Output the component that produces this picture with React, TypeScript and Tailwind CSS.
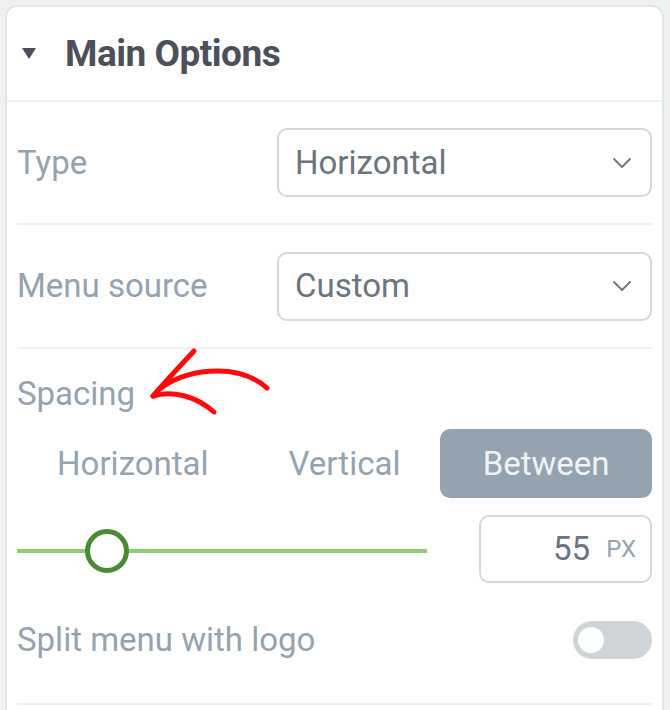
import React, { useState } from 'react';

const font = { fontFamily: 'Roboto, "Noto Sans", sans-serif' };

function Chevron() {
  return (
    <svg width="20" height="12" viewBox="0 0 20 12" fill="none" className="shrink-0">
      <path d="M2 2 L10 10 L18 2" stroke="#6b7580" strokeWidth="1.8" strokeLinecap="round" strokeLinejoin="round" />
    </svg>
  );
}

function SelectRow({ label, value, h }: { label: string; value: string; h: string }) {
  return (
    <div className={`flex items-center border-b-2 border-[#eef0f1] ${h}`}>
      <div className="w-[260px] text-[33px] text-[#95a3b1]">{label}</div>
      <div className="flex-1 h-[69px] flex items-center justify-between rounded-[10px] border-2 border-[#d3d8dc] pl-[16px] pr-[18px]">
        <span className="text-[33px] text-[#6b7580]">{value}</span>
        <Chevron />
      </div>
    </div>
  );
}

export default function App() {
  const [tab, setTab] = useState('Between');
  const [split, setSplit] = useState(false);
  const tabs = ['Horizontal', 'Vertical', 'Between'];

  return (
    <div className="w-[670px] h-[710px] bg-[#eef1f0] pt-[5px] pl-[5px] overflow-hidden" style={font}>
      <div className="relative w-[659px] h-[720px] bg-white border-2 border-[#e0e7e6] rounded-t-[12px]">
        {/* header */}
        <div className="h-[95px] flex items-center pl-[15px] border-b-2 border-[#eef0f1]">
          <svg width="14" height="12" viewBox="0 0 14 12" className="mr-[29px]">
            <path d="M0 0 H14 L7 11 Z" fill="#4b505a" />
          </svg>
          <h2 className="text-[37px] font-bold text-[#4b505a] tracking-[-0.5px]">Main Options</h2>
        </div>

        <div className="px-[10px]">
          <SelectRow label="Type" value="Horizontal" h="h-[123px]" />
          <SelectRow label="Menu source" value="Custom" h="h-[124px]" />

          {/* spacing */}
          <div className="pt-[24px] pb-[44px] border-b-2 border-[#eef0f1]">
            <div className="leading-[42px] text-[33px] text-[#95a3b1]">Spacing</div>

            <div className="grid grid-cols-3 h-[69px] mt-[14px]">
              {tabs.map((t) => (
                <button
                  key={t}
                  onClick={() => setTab(t)}
                  className={
                    t === tab
                      ? 'rounded-[10px] bg-[#95a3b0] text-[33px] text-[#eef2f5]'
                      : 'pl-[20px] text-[33px] text-[#95a3b1]'
                  }
                >
                  {t}
                </button>
              ))}
            </div>

            <div className="flex items-center justify-between mt-[17px]">
              <div className="relative w-[410px] h-[44px] mt-[3px] flex items-center">
                <div className="w-full h-[4px] bg-[#8fcc7a]" />
                <div className="absolute left-[68px] top-0 w-[44px] h-[44px] rounded-full border-[5px] border-[#4a8a32] bg-white" />
              </div>
              <div className="w-[173px] h-[68px] flex items-center justify-end rounded-[10px] border-2 border-[#d3d8dc] pr-[14px]">
                <span className="text-[33px] text-[#6b7580]">55</span>
                <span className="ml-[16px] text-[24px] text-[#95a3b1]">PX</span>
              </div>
            </div>

            <div className="flex items-center justify-between mt-[37px] h-[39px]">
              <span className="text-[33px] text-[#95a3b1]">Split menu with logo</span>
              <button
                onClick={() => setSplit(!split)}
                className="w-[79px] h-[38px] rounded-full bg-[#cfd4d9] flex items-center px-[5px]"
              >
                <span className={split ? 'ml-auto w-[26px] h-[26px] rounded-full bg-white' : 'w-[26px] h-[26px] rounded-full bg-white'} />
              </button>
            </div>
          </div>
        </div>

        {/* hand-drawn annotation arrow */}
        <svg className="absolute left-[-7px] top-[-7px] pointer-events-none" width="670" height="710" viewBox="0 0 670 710" fill="none">
          <g stroke="#ff0a0a" strokeWidth="5" strokeLinecap="round" strokeLinejoin="round">
            <path d="M194 351 C182 364 166 381 153 396" />
            <path d="M153 396 C172 390 196 396 214 412" />
            <path d="M160 389 C180 371 236 360 267 388" />
          </g>
        </svg>
      </div>
    </div>
  );
}
